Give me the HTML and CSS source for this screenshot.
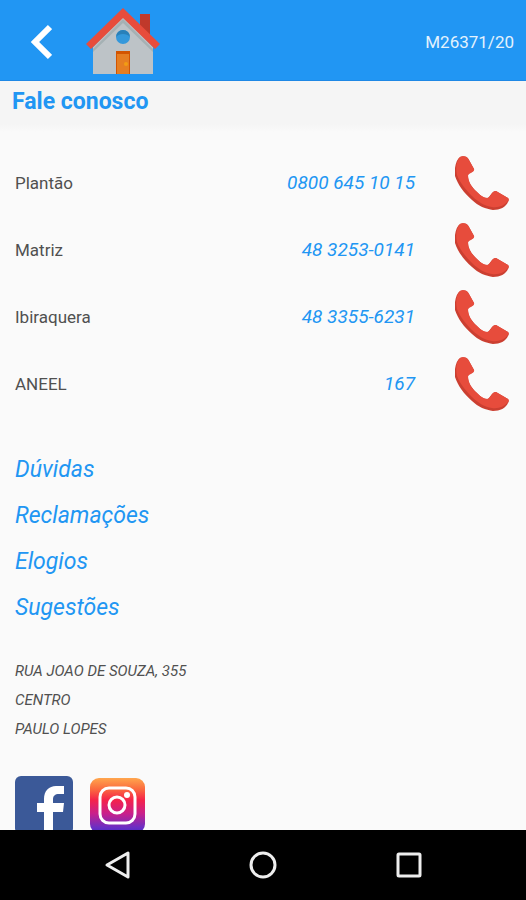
FILE: index.html
```html
<!DOCTYPE html>
<html lang="pt-BR">
<head>
    <meta charset="UTF-8">
    <meta name="viewport" content="width=device-width, initial-scale=1.0">
    <title>Fale conosco</title>
    <link rel="stylesheet" href="styles.css">
</head>
<body>
    <!-- phone icon shared by all contact rows -->
    <svg class="sprite" aria-hidden="true">
        <symbol id="phone" viewBox="0 0 54 54">
            <path fill="#cb3f31" d="M5 1C7 0 12-1 14 4l5 9c1 3-6 3-6 7 0 6 4 11 8 15s7 7 11 7c4-1 4-7 9-7l12 7c1 1 1 3 0 4-2 5-8 8-15 8-7-1-15-4-21-10C9 37 3 29 0 20-1 12 1 4 5 1z"/>
            <path fill="#e74c3c" d="M5 1C7 0 12-1 14 4l5 9c1 3-5 4-6 6 0 7 4 13 9 17 4 4 7 6 11 6 3-2 4-7 8-7l12 7c1 1 1 2 0 3-4 5-10 7-16 6-7-1-14-5-20-11C11 34 5 27 2 19 0 11 2 4 5 1z"/>
        </symbol>
    </svg>

    <header class="topbar">
        <button class="icon-button" type="button" aria-label="Voltar">
            <svg width="22" height="36" viewBox="0 0 22 36">
                <path d="M20 3L5 18l15 15" fill="none" stroke="#fff" stroke-width="6"/>
            </svg>
        </button>
        <a class="home" href="#" aria-label="Início">
            <svg width="74" height="68" viewBox="0 0 74 68">
                <path fill="#c0392b" d="M54 6h10v23l-10-8z"/>
                <path fill="#bdc3c7" d="M37 8l30 31v27H7V39z"/>
                <path fill="#95a5a6" d="M37 11L7 41v3l30-29 30 29v-3z" opacity=".6"/>
                <path fill="#e74c3c" d="M37 0L0 36l5 5 32-31 32 31 5-5z"/>
                <circle cx="37" cy="29" r="7" fill="#3498db"/>
                <path fill="#2980b9" d="M30 29a7 7 0 0 1 14 0c-3-4-11-4-14 0z"/>
                <path fill="#d35400" d="M30 43h14v23H30z"/>
                <path fill="#e67e22" d="M31 46h12v20H31z"/>
                <circle cx="40" cy="56" r="2" fill="#f39c12"/>
            </svg>
        </a>
        <span class="code">M26371/20</span>
    </header>

    <h1 class="page-title">Fale conosco</h1>

    <main class="content">
        <ul class="phones">
            <li class="phone-row">
                <span class="name">Plantão</span>
                <a class="number" href="tel:08006451015">0800 645 10 15</a>
                <a class="call" href="tel:08006451015" aria-label="Ligar para Plantão"><svg><use href="#phone"/></svg></a>
            </li>
            <li class="phone-row">
                <span class="name">Matriz</span>
                <a class="number" href="tel:4832530141">48 3253-0141</a>
                <a class="call" href="tel:4832530141" aria-label="Ligar para Matriz"><svg><use href="#phone"/></svg></a>
            </li>
            <li class="phone-row">
                <span class="name">Ibiraquera</span>
                <a class="number" href="tel:4833556231">48 3355-6231</a>
                <a class="call" href="tel:4833556231" aria-label="Ligar para Ibiraquera"><svg><use href="#phone"/></svg></a>
            </li>
            <li class="phone-row">
                <span class="name">ANEEL</span>
                <a class="number" href="tel:167">167</a>
                <a class="call" href="tel:167" aria-label="Ligar para ANEEL"><svg><use href="#phone"/></svg></a>
            </li>
        </ul>

        <nav class="subjects">
            <a href="#">Dúvidas</a>
            <a href="#">Reclamações</a>
            <a href="#">Elogios</a>
            <a href="#">Sugestões</a>
        </nav>

        <address class="address">
            <div>RUA JOAO DE SOUZA, 355</div>
            <div>CENTRO</div>
            <div>PAULO LOPES</div>
        </address>

        <div class="social">
            <a href="#" aria-label="Facebook">
                <svg width="58" height="58" viewBox="0 0 58 58">
                    <rect width="58" height="58" rx="6" fill="#3b5998"/>
                    <path fill="#fff" d="M29 58V36h-7v-9h7v-4c0-8 5-13 12-13h8v8h-5c-4 0-6 2-6 5v4h11l-1 9H38v22z"/>
                </svg>
            </a>
            <a href="#" aria-label="Instagram">
                <svg width="55" height="55" viewBox="0 0 55 55">
                    <defs>
                        <linearGradient id="insta" x1="0" y1="0" x2="0" y2="1">
                            <stop offset="0" stop-color="#ffa64d"/>
                            <stop offset=".2" stop-color="#fb6b3f"/>
                            <stop offset=".4" stop-color="#f5234a"/>
                            <stop offset=".65" stop-color="#c8208c"/>
                            <stop offset=".9" stop-color="#6a2fc4"/>
                            <stop offset="1" stop-color="#4a2cc8"/>
                        </linearGradient>
                    </defs>
                    <rect width="55" height="55" rx="9" fill="url(#insta)"/>
                    <g fill="none" stroke="#fff" stroke-width="3">
                        <rect x="10" y="10" width="35" height="35" rx="9"/>
                        <circle cx="27" cy="27" r="8"/>
                    </g>
                    <circle cx="37" cy="17" r="3" fill="#fff"/>
                </svg>
            </a>
        </div>
    </main>

    <footer class="navbar">
        <button class="icon-button" type="button" aria-label="Voltar">
            <svg width="30" height="30" viewBox="0 0 30 30"><path d="M26 3v24L5 15z"/></svg>
        </button>
        <button class="icon-button" type="button" aria-label="Tela inicial">
            <svg width="30" height="30" viewBox="0 0 30 30"><circle cx="15" cy="15" r="12"/></svg>
        </button>
        <button class="icon-button" type="button" aria-label="Aplicativos recentes">
            <svg width="30" height="30" viewBox="0 0 30 30"><rect x="4" y="4" width="22" height="22" rx="1"/></svg>
        </button>
    </footer>
</body>
</html>
```

FILE: styles.css
```css
* {
    box-sizing: border-box;
}
body {
    display: flex;
    flex-direction: column;
    height: 100vh;
    margin: 0;
    font-family: Roboto, "Liberation Sans", sans-serif;
    color: #505050;
    background: #fafafa;
}
a {
    color: #2196f3;
    text-decoration: none;
}
svg {
    display: block;
}
.sprite {
    position: absolute;
    width: 0;
    height: 0;
}
.icon-button {
    padding: 0;
    border: none;
    background: none;
    cursor: pointer;
}

/* top bar */
.topbar {
    display: flex;
    flex-shrink: 0;
    align-items: center;
    gap: 34px;
    padding: 8px 12px 4px 30px;
    border-bottom: 1px solid #1e88e5;
    background: #2196f3;
}
.code {
    margin-left: auto;
    font-size: 17px;
    color: #e3f2fd;
}
.page-title {
    flex-shrink: 0;
    margin: 0;
    padding: 7px 12px 16px;
    font-size: 23px;
    font-weight: bold;
    line-height: 28px;
    color: #2196f3;
    background: linear-gradient(#f5f5f5 85%, #fafafa);
}

.content {
    flex: 1;
    min-height: 0;
    padding: 17px 15px 0;
    overflow: hidden;
}
.phones {
    margin: 0;
    padding: 0;
    list-style: none;
}
.phone-row {
    display: flex;
    align-items: center;
    height: 67px;
}
.name {
    flex: 1;
    font-size: 17px;
}
.number {
    font-size: 19px;
    font-style: italic;
}
.call {
    margin: 0 2px 0 40px;
}
.call svg {
    width: 54px;
    height: 54px;
}

.subjects {
    display: flex;
    flex-direction: column;
    align-items: flex-start;
    margin-top: 30px;
    font-size: 23px;
    font-style: italic;
    line-height: 46px;
}
.address {
    margin-top: 26px;
    font-size: 15px;
    line-height: 29px;
}
.social {
    display: flex;
    align-items: center;
    gap: 17px;
    margin-top: 32px;
}

/* system navigation */
.navbar {
    display: flex;
    flex-shrink: 0;
    align-items: center;
    justify-content: space-between;
    height: 70px;
    padding: 0 102px;
    background: #000;
}
.navbar svg {
    fill: none;
    stroke: #eee;
    stroke-width: 3;
    stroke-linejoin: round;
}
```
